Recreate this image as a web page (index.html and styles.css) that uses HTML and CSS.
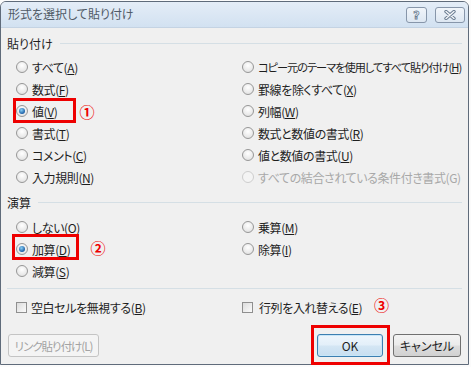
FILE: index.html
```html
<!DOCTYPE html>
<html lang="ja">
<head>
  <meta charset="UTF-8">
  <title>形式を選択して貼り付け</title>
  <link rel="stylesheet" href="styles.css">
</head>
<body>
  <div class="window">
    <div class="titlebar">
      <span class="title">形式を選択して貼り付け</span>
      <div class="tb-buttons">
        <span class="tb-btn help">?</span>
        <span class="tb-btn close">
          <svg width="12" height="10" viewBox="0 0 12 10">
            <path d="M2 1.5 L10 8.5 M10 1.5 L2 8.5" stroke="#6b7d92" stroke-width="3.4" stroke-linecap="round"/>
            <path d="M2 1.5 L10 8.5 M10 1.5 L2 8.5" stroke="#f6f8fa" stroke-width="1.4" stroke-linecap="round"/>
          </svg>
        </span>
      </div>
    </div>

    <div class="content">
      <div class="group-title first"><span>貼り付け</span><i></i></div>
      <div class="option-grid paste-grid">
        <label class="opt"><span class="radio"></span><span>すべて(<u>A</u>)</span></label>
        <label class="opt"><span class="radio"></span><span class="long">コピー元のテーマを使用してすべて貼り付け(<u>H</u>)</span></label>
        <label class="opt"><span class="radio"></span><span>数式(<u>F</u>)</span></label>
        <label class="opt"><span class="radio"></span><span>罫線を除くすべて(<u>X</u>)</span></label>
        <label class="opt marked mark-value"><span class="radio checked"></span><span>値(<u>V</u>)</span><span class="badge">①</span></label>
        <label class="opt"><span class="radio"></span><span>列幅(<u>W</u>)</span></label>
        <label class="opt"><span class="radio"></span><span>書式(<u>T</u>)</span></label>
        <label class="opt"><span class="radio"></span><span>数式と数値の書式(<u>R</u>)</span></label>
        <label class="opt"><span class="radio"></span><span>コメント(<u>C</u>)</span></label>
        <label class="opt"><span class="radio"></span><span>値と数値の書式(<u>U</u>)</span></label>
        <label class="opt"><span class="radio"></span><span>入力規則(<u>N</u>)</span></label>
        <label class="opt disabled"><span class="radio"></span><span>すべての結合されている条件付き書式(G)</span></label>
      </div>

      <div class="group-title"><span>演算</span><i></i></div>
      <div class="option-grid op-grid">
        <label class="opt"><span class="radio"></span><span>しない(<u>O</u>)</span></label>
        <label class="opt"><span class="radio"></span><span>乗算(<u>M</u>)</span></label>
        <label class="opt marked mark-add"><span class="radio checked"></span><span>加算(<u>D</u>)</span><span class="badge">②</span></label>
        <label class="opt"><span class="radio"></span><span>除算(<u>I</u>)</span></label>
        <label class="opt"><span class="radio"></span><span>減算(<u>S</u>)</span></label>
      </div>

      <div class="separator"></div>

      <div class="option-grid check-grid">
        <label class="opt"><span class="checkbox"></span><span>空白セルを無視する(<u>B</u>)</span></label>
        <label class="opt check-right"><span class="checkbox"></span><span>行列を入れ替える(<u>E</u>)</span></label>
      </div>

      <div class="button-row">
        <button class="btn disabled">リンク貼り付け(L)</button>
        <div class="button-group">
          <button class="btn default">OK<span class="badge ok-badge">③</span></button>
          <button class="btn">キャンセル</button>
        </div>
      </div>
    </div>
  </div>
</body>
</html>
```

FILE: styles.css
```css
body {
  margin: 0;
  background: #fbfbfb;
  font-family: "Noto Sans CJK JP", sans-serif;
  font-size: 12px;
  color: #1e1e1e;
  font-feature-settings: "palt";
}

.window {
  width: 469px;
  height: 364px;
  margin: 1px 0 0 0;
  box-sizing: border-box;
  border: 1px solid #5f6b7a;
  border-radius: 6px 6px 0 0;
  background: #f0f0f0;
  display: flex;
  flex-direction: column;
}

.titlebar {
  height: 25px;
  display: flex;
  align-items: flex-start;
  padding: 0 3px 0 7px;
  background: linear-gradient(#e4edf7, #d2e1f1);
  border-radius: 5px 5px 0 0;
  border-bottom: 1px solid #c4d3e3;
}

.title {
  color: #505a66;
  line-height: 24px;
  font-size: 12px;
}

.tb-buttons {
  margin-left: auto;
  margin-top: 5px;
  display: flex;
  gap: 8px;
}

.tb-btn {
  height: 16px;
  box-sizing: border-box;
  border: 1px solid #8796aa;
  border-radius: 3px;
  background: linear-gradient(#f1f5fa, #dde7f2);
  display: flex;
  align-items: center;
  justify-content: center;
}

.help {
  width: 21px;
  font-family: "DejaVu Sans", sans-serif;
  font-weight: bold;
  font-size: 11px;
  color: #f6f8fa;
  -webkit-text-stroke: 0.8px #6b7d92;
}

.close {
  width: 30px;
}

.content {
  padding: 0 6px;
  display: flex;
  flex-direction: column;
}

.group-title {
  height: 16px;
  display: flex;
  align-items: center;
  gap: 7px;
  margin-top: 6px;
}

.group-title.first {
  margin-top: 7px;
}

.group-title i {
  flex: 1;
  height: 1px;
  background: #d5dfe5;
}

.option-grid {
  display: grid;
  grid-template-columns: 226px 1fr;
  grid-auto-rows: 22px;
  margin-left: 9px;
}

.paste-grid {
  margin-top: 5px;
}

.op-grid {
  margin-top: 6px;
}

.opt {
  display: flex;
  align-items: center;
  gap: 4px;
  white-space: nowrap;
  justify-self: start;
  letter-spacing: -0.4px;
}

.opt .long {
  font-size: 11.2px;
  letter-spacing: -1px;
}

.opt u {
  text-underline-offset: 1px;
}

.radio {
  width: 12px;
  height: 12px;
  box-sizing: border-box;
  border-radius: 50%;
  border: 1px solid #979797;
  background: radial-gradient(circle at 50% 35%, #ffffff, #dcdcdc);
  display: flex;
  align-items: center;
  justify-content: center;
  flex-shrink: 0;
}

.radio.checked::after {
  content: "";
  width: 6px;
  height: 6px;
  border-radius: 50%;
  background: radial-gradient(circle at 40% 35%, #8ad0f5, #1c5fa6 70%);
}

.opt.disabled {
  color: #a8a8a8;
}

.opt.disabled .radio {
  border-color: #cdcdcd;
  background: #f4f4f4;
}

.marked {
  position: relative;
}

.marked::before {
  content: "";
  position: absolute;
  box-sizing: border-box;
  border: 3px solid #ee0000;
}

.mark-value::before {
  left: -3px;
  top: -2px;
  width: 63px;
  height: 25px;
}

.mark-add::before {
  left: -4px;
  top: -4px;
  width: 67px;
  height: 26px;
}

.badge {
  color: #ee0000;
  font-weight: bold;
  font-size: 15px;
  line-height: 1;
  letter-spacing: 0;
}

.mark-value .badge {
  margin-left: 18px;
}

.mark-add .badge {
  margin-left: 16px;
  margin-top: -4px;
}

.separator {
  height: 1px;
  background: #d5dfe5;
  margin-top: 6px;
}

.check-grid {
  margin-top: 7px;
}

.checkbox {
  width: 11px;
  height: 11px;
  box-sizing: border-box;
  border: 1px solid #8f8f8f;
  background: linear-gradient(135deg, #dcdcdc, #fbfbfb);
  flex-shrink: 0;
}

.check-right {
  gap: 6px;
}

.button-row {
  margin-top: 16px;
  display: flex;
  justify-content: space-between;
  padding: 0 1px;
}

.button-group {
  display: flex;
  gap: 10px;
}

.btn {
  height: 23px;
  box-sizing: border-box;
  font-family: inherit;
  font-size: 12px;
  font-feature-settings: "palt";
  color: #1e1e1e;
  border: 1px solid #707070;
  border-radius: 3px;
  background: linear-gradient(#f3f3f3 0%, #ebebeb 48%, #dddddd 52%, #d1d1d1 100%);
  padding: 0;
  width: 68px;
  white-space: nowrap;
}

.btn.disabled {
  width: 91px;
  color: #a3a3a3;
  border-color: #c4c4c4;
  background: #f4f4f4;
  font-size: 11.5px;
  letter-spacing: -1px;
}

.btn.default {
  width: 66px;
  position: relative;
  border-color: #3c7fb1;
  box-shadow: inset 0 0 0 1px #c8e6f8;
  background: linear-gradient(#eef6fc 0%, #e3eff9 48%, #d4e6f4 52%, #c7def0 100%);
}

.btn.default::before {
  content: "";
  position: absolute;
  left: -7px;
  top: -10px;
  width: 79px;
  height: 40px;
  box-sizing: border-box;
  border: 3px solid #ee0000;
}

.ok-badge {
  position: absolute;
  left: 56px;
  top: -38px;
}
```
